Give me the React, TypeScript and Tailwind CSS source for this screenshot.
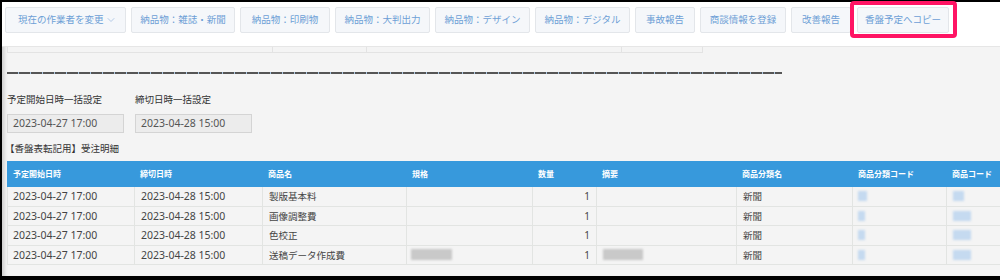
import { ChevronDown } from 'lucide-react';

const buttons = [
  { label: '納品物：雑誌・新聞', w: 'w-[104px]' },
  { label: '納品物：印刷物', w: 'w-[90px]' },
  { label: '納品物：大判出力', w: 'w-[95px]' },
  { label: '納品物：デザイン', w: 'w-[95px]' },
  { label: '納品物：デジタル', w: 'w-[95px]' },
  { label: '事故報告', w: 'w-[60px]' },
  { label: '商談情報を登録', w: 'w-[86px]' },
  { label: '改善報告', w: 'w-[60px]' },
];

const cols = [
  { key: 'start', label: '予定開始日時', w: 'w-[127px]' },
  { key: 'end', label: '締切日時', w: 'w-[128px]' },
  { key: 'name', label: '商品名', w: 'w-[144px]' },
  { key: 'spec', label: '規格', w: 'w-[126px]' },
  { key: 'qty', label: '数量', w: 'w-[64px]' },
  { key: 'note', label: '摘要', w: 'w-[140px]' },
  { key: 'cat', label: '商品分類名', w: 'w-[116px]' },
  { key: 'catCode', label: '商品分類コード', w: 'w-[94px]' },
  { key: 'code', label: '商品コード', w: 'w-[60px]' },
];

const rows = [
  { name: '製版基本料', blurred: false, first: true },
  { name: '画像調整費', blurred: false, first: false },
  { name: '色校正', blurred: false, first: false },
  { name: '送稿データ作成費', blurred: true, first: false },
];

function Btn({ label, w, children }: { label: string; w: string; children?: React.ReactNode }) {
  return (
    <button
      className={`${w} h-[26px] shrink-0 flex items-center ${children ? 'justify-between pl-[12px] pr-[8px]' : 'justify-center'} rounded-[2px] border border-[#e3e6ea] bg-[#f5f7fa] text-[9.5px] text-[#6d9fd6]`}
    >
      <span>{label}</span>
      {children}
    </button>
  );
}

export default function App() {
  return (
    <div
      className="w-[1000px] h-[280px] overflow-hidden bg-black pt-[2px] pl-[2px] pb-[4px]"
      style={{ fontFamily: '"Noto Sans", "Noto Sans CJK JP", sans-serif' }}
    >
      <div className="relative h-full bg-[#f4f4f4] flex flex-col shadow-[inset_5px_0_4px_-3px_rgba(0,0,0,0.18)]">
        {/* toolbar */}
        <div className="h-[45px] shrink-0 bg-white border-b border-[#e6e6e6] flex items-start pt-[5px] pl-[3px] gap-[5px]">
          <Btn label="現在の作業者を変更" w="w-[121px]">
            <ChevronDown className="h-3 w-3 text-[#9dbbe0]" strokeWidth={1.5} />
          </Btn>
          {buttons.map((b) => (
            <Btn key={b.label} label={b.label} w={b.w} />
          ))}
          <div className="relative ml-[1px]">
            <Btn label="香盤予定へコピー" w="w-[92px]" />
            <div className="absolute -left-[7px] -right-[8px] -top-[6px] -bottom-[5px] rounded-[4px] border-[4px] border-[#ff1464]" />
          </div>
        </div>

        {/* previous rows cut off */}
        <div className="ml-[5px] flex h-[6px] shrink-0">
          <div className="w-[266px] border-x border-b border-[#e3e3e3]" />
          <div className="w-[94px] border-r border-b border-[#e3e3e3]" />
          <div className="w-[255px] border-r border-b border-[#e3e3e3]" />
          <div className="w-[81px] border-r border-b border-[#e3e3e3]" />
        </div>

        {/* separator */}
        <div className="ml-[5px] mt-[19px] h-[2px] w-[775px] bg-[repeating-linear-gradient(90deg,#555_0_11px,#a9c4de_11px_12px)]" />

        {/* bulk settings */}
        <div className="ml-[5px] mt-[20px] flex gap-[11px] text-[#333]">
          <div className="w-[117px]">
            <div className="h-[12px] text-[9.5px] leading-[12px]">予定開始日時一括設定</div>
            <div className="mt-[8px] h-[19px] border border-[#d4d4d4] bg-[#ececec] pl-[5px] text-[10.5px] leading-[17px] text-[#555]">
              2023-04-27 17:00
            </div>
          </div>
          <div className="w-[117px]">
            <div className="h-[12px] text-[9.5px] leading-[12px]">締切日時一括設定</div>
            <div className="mt-[8px] h-[19px] border border-[#d4d4d4] bg-[#ececec] pl-[5px] text-[10.5px] leading-[17px] text-[#555]">
              2023-04-28 15:00
            </div>
          </div>
        </div>

        <div className="ml-[3px] mt-[10px] h-[12px] text-[9.5px] leading-[12px] text-[#333]">【香盤表転記用】受注明細</div>

        {/* table */}
        <div className="ml-[5px] mt-[6px] w-[1000px] shrink-0">
          <div className="flex h-[26px] bg-[#3799dc] text-white">
            {cols.map((c) => (
              <div key={c.key} className={`${c.w} shrink-0 pl-[6px] text-[8px] font-bold leading-[26px]`}>
                {c.label}
              </div>
            ))}
          </div>
          {rows.map((r) => (
            <div key={r.name} className="flex h-[19.5px] border-b border-l border-[#e2e4e2] text-[#444]">
              <div className="w-[127px] shrink-0 border-r border-[#e2e4e2] pl-[5px] text-[10.5px] leading-[19px]">2023-04-27 17:00</div>
              <div className="w-[128px] shrink-0 border-r border-[#e2e4e2] pl-[6px] text-[10.5px] leading-[19px]">2023-04-28 15:00</div>
              <div className="w-[144px] shrink-0 border-r border-[#e2e4e2] pl-[6px] text-[9.5px] leading-[19px]">{r.name}</div>
              <div className="w-[126px] shrink-0 border-r border-[#e2e4e2] pl-[4px] flex items-center">
                {r.blurred && <div className="h-[11px] w-[41px] bg-[#c9c9c9] blur-[1px]" />}
              </div>
              <div className="w-[64px] shrink-0 border-r border-[#e2e4e2] pr-[6px] text-right text-[10px] leading-[19px]">1</div>
              <div className="w-[140px] shrink-0 border-r border-[#e2e4e2] pl-[6px] flex items-center">
                {r.blurred && <div className="h-[11px] w-[40px] bg-[#c9c9c9] blur-[1px]" />}
              </div>
              <div className="w-[116px] shrink-0 border-r border-[#e2e4e2] pl-[6px] text-[9.5px] leading-[19px]">新聞</div>
              <div className="w-[94px] shrink-0 border-r border-[#e2e4e2] pl-[5px] flex items-center">
                <div className={`h-[10px] ${r.first ? 'w-[9px]' : 'w-[7px]'} bg-[#c5daf0] blur-[1px]`} />
              </div>
              <div className="w-[60px] shrink-0 pl-[6px] flex items-center">
                <div className={`h-[10px] ${r.first ? 'w-[11px]' : 'w-[18px]'} bg-[#c5daf0] blur-[1px]`} />
              </div>
            </div>
          ))}
        </div>
      </div>
    </div>
  );
}
